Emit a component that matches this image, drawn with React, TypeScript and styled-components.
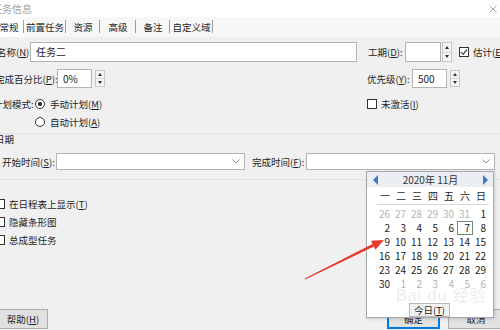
import React from 'react';
import styled, { createGlobalStyle, css } from 'styled-components';

const GlobalStyle = createGlobalStyle`
  html, body { margin: 0; padding: 0; }
  body {
    width: 500px;
    height: 330px;
    overflow: hidden;
    background: #f0f0f0;
    font-family: "Noto Sans CJK SC", "Noto Sans", sans-serif;
    font-size: 9.5px;
    color: #1e1e1e;
  }
  u { text-decoration-thickness: 1px; text-underline-offset: 1px; }
`;

const Dialog = styled.div`
  position: relative;
  width: 500px;
  height: 330px;
  display: flex;
  flex-direction: column;
  overflow: hidden;
`;

const TitleBar = styled.div`
  height: 17px;
  background: #fff;
  display: flex;
  align-items: center;
  justify-content: space-between;
  padding-right: 3px;
`;

const Title = styled.span`
  margin-left: -8px;
  color: #a0a0a0;
  font-size: 10px;
  line-height: 12px;
`;

const TabStrip = styled.div`
  height: 20px;
  display: flex;
  align-items: stretch;
  background: #f7f7f7;
`;

const Tab = styled.div<{ w: number; active?: boolean; first?: boolean }>`
  width: ${p => p.w}px;
  display: flex;
  align-items: center;
  justify-content: center;
  position: relative;
  line-height: 12px;
  ${p => p.first && css`margin-left: -6px;`}
  ${p => p.active && css`background: #fff;`}
  &::after {
    content: "";
    position: absolute;
    right: 0;
    top: 3px;
    bottom: 4px;
    width: 1px;
    background: #9c9c9c;
  }
`;

const Content = styled.div`
  display: flex;
  flex-direction: column;
`;

const Row = styled.div<{ top: number; h: number }>`
  margin-top: ${p => p.top}px;
  height: ${p => p.h}px;
  display: grid;
  grid-template-columns: 367px 1fr;
  align-items: center;
`;

const Group = styled.div`
  display: flex;
  align-items: center;
  height: 100%;
`;

const Label = styled.span<{ w?: number; ml?: number }>`
  ${p => p.w && css`width: ${p.w}px;`}
  ${p => p.ml && css`margin-left: ${p.ml}px;`}
  flex-shrink: 0;
  white-space: nowrap;
  line-height: 12px;
`;

const TextBox = styled.div<{ w: number; h?: number }>`
  width: ${p => p.w}px;
  height: ${p => p.h ?? 20}px;
  box-sizing: border-box;
  border: 1px solid #b4b4b4;
  background: #fff;
  display: flex;
  align-items: center;
  padding-left: 5px;
  font-size: 10px;
  line-height: 12px;
`;

const Spin = styled.div<{ h: number; ml: number }>`
  width: 10px;
  height: ${p => p.h}px;
  margin-left: ${p => p.ml}px;
  box-sizing: border-box;
  border: 1px solid #c8c8c8;
  background: #f4f4f4;
  display: flex;
  flex-direction: column;
`;

const SpinHalf = styled.div<{ down?: boolean }>`
  flex: 1;
  display: flex;
  align-items: center;
  justify-content: center;
  ${p => p.down && css`border-top: 1px solid #d6d6d6;`}
  &::before {
    content: "";
    border-left: 2px solid transparent;
    border-right: 2px solid transparent;
    ${p => p.down ? css`border-top: 3px solid #333;` : css`border-bottom: 3px solid #333;`}
  }
`;

const Box = styled.span<{ ml?: number }>`
  width: 10px;
  height: 10px;
  box-sizing: border-box;
  border: 1px solid #333;
  background: #fff;
  flex-shrink: 0;
  margin-left: ${p => p.ml ?? 0}px;
  margin-right: 4px;
  display: flex;
  align-items: center;
  justify-content: center;
`;

const Radio = styled.span<{ on?: boolean }>`
  width: 10px;
  height: 10px;
  box-sizing: border-box;
  border: 1px solid #333;
  border-radius: 50%;
  background: #fff;
  margin-right: 5px;
  flex-shrink: 0;
  display: flex;
  align-items: center;
  justify-content: center;
  &::after {
    content: "";
    width: 4px;
    height: 4px;
    border-radius: 50%;
    background: ${p => (p.on ? '#222' : 'transparent')};
  }
`;

const SectionHead = styled.div`
  margin-top: 4px;
  border-top: 1px solid #e2e2e2;
  height: 11px;
  line-height: 10px;
  margin-left: -5px;
`;

const DateRow = styled.div`
  margin-top: 8px;
  height: 17px;
  display: flex;
  align-items: center;
  padding-left: 2px;
`;

const Combo = styled.div<{ w: number }>`
  width: ${p => p.w}px;
  height: 17px;
  box-sizing: border-box;
  border: 1px solid #b4b4b4;
  background: #fff;
  display: flex;
  align-items: center;
  justify-content: flex-end;
  padding-right: 4px;
`;

const Divider = styled.div`
  margin-top: 9px;
  border-top: 1px solid #e2e2e2;
`;

const CheckList = styled.div`
  margin-top: 17px;
  display: flex;
  flex-direction: column;
  gap: 4px;
`;

const CheckLine = styled.div`
  height: 14px;
  display: flex;
  align-items: center;
`;

const Footer = styled.div`
  margin-top: auto;
  margin-bottom: 1px;
  height: 20px;
  display: flex;
  align-items: flex-start;
`;

const Button = styled.div<{ w: number; primary?: boolean }>`
  width: ${p => p.w}px;
  height: 20px;
  box-sizing: border-box;
  background: #e1e1e1;
  border: 1px solid ${p => (p.primary ? '#0078d7' : '#adadad')};
  ${p => p.primary && css`box-shadow: inset 0 0 0 1px #0078d7;`}
  display: flex;
  align-items: center;
  justify-content: center;
  line-height: 12px;
  flex-shrink: 0;
`;

const HelpButton = styled(Button)`
  margin-left: -2px;
`;

const RightButtons = styled.div`
  margin-left: auto;
  margin-right: -4px;
  display: flex;
  gap: 8px;
`;

/* calendar popup */
const Calendar = styled.div`
  position: absolute;
  left: 366px;
  top: 171px;
  width: 128px;
  height: 147px;
  box-sizing: border-box;
  background: #fff;
  border: 1px solid #a8a8a8;
  box-shadow: 1px 1px 3px rgba(0, 0, 0, 0.15);
  display: flex;
  flex-direction: column;
  font-size: 10px;
`;

const CalHead = styled.div`
  height: 15px;
  background: #eaeef3;
  display: flex;
  align-items: center;
  justify-content: space-between;
  padding: 0 5px 0 6px;
  line-height: 12px;
  color: #333;
`;

const Arrow = styled.span<{ dir: 'l' | 'r' }>`
  width: 0;
  height: 0;
  border-top: 5px solid transparent;
  border-bottom: 5px solid transparent;
  ${p => p.dir === 'l'
    ? css`border-right: 5px solid #3a79c4;`
    : css`border-left: 5px solid #3a79c4;`}
`;

const CalBody = styled.div`
  padding-left: 10px;
  width: 112px;
`;

const WeekRow = styled.div`
  margin-top: 2px;
  height: 14px;
  display: grid;
  grid-template-columns: repeat(7, 16px);
  border-bottom: 1px solid #d8d8d8;
  padding-bottom: 1px;
  align-items: center;
  line-height: 12px;
`;

const WeekDay = styled.span`
  text-align: center;
`;

const DayGrid = styled.div`
  margin-top: 2px;
  display: grid;
  grid-template-columns: repeat(7, 16px);
  grid-auto-rows: 14px;
`;

const Day = styled.span<{ muted?: boolean; today?: boolean }>`
  box-sizing: border-box;
  text-align: right;
  padding-right: 3px;
  line-height: 14px;
  color: ${p => (p.muted ? '#b3b3b3' : '#222')};
  ${p => p.today && css`border: 1px solid #6f8a6f; line-height: 12px; padding-right: 2px;`}
`;

const TodayButton = styled.div`
  margin: 12px 0 0 42px;
  width: 41px;
  height: 14px;
  box-sizing: border-box;
  border: 1px solid #b8b8b8;
  background: #f2f2f2;
  display: flex;
  align-items: center;
  justify-content: center;
  line-height: 12px;
  font-size: 9.5px;
`;

const Watermark = styled.div`
  position: absolute;
  left: 396px;
  top: 287px;
  font-family: "Liberation Sans", "Noto Sans CJK SC", sans-serif;
  font-size: 16px;
  line-height: 18px;
  letter-spacing: 1px;
  color: rgba(160, 160, 160, 0.22);
  pointer-events: none;
`;

const Overlay = styled.svg`
  position: absolute;
  left: 0;
  top: 0;
  pointer-events: none;
`;

const U: React.FC<{ k: string }> = ({ k }) => <>(<u>{k}</u>)</>;

const days: { d: number; muted?: boolean }[] = [
  ...[26, 27, 28, 29, 30, 31].map(d => ({ d, muted: true })),
  ...Array.from({ length: 30 }, (_, i) => ({ d: i + 1 })),
  ...[1, 2, 3, 4, 5, 6].map(d => ({ d, muted: true })),
];

const CheckMark = () => (
  <svg width="8" height="8" viewBox="0 0 8 8">
    <path d="M1 4.2 L3.2 6.3 L7 1.6" fill="none" stroke="#222" strokeWidth="1.1" />
  </svg>
);

const Chevron = () => (
  <svg width="8" height="5" viewBox="0 0 8 5">
    <path d="M0.5 0.5 L4 4 L7.5 0.5" fill="none" stroke="#8a8a8a" strokeWidth="1" />
  </svg>
);

export default function App() {
  return (
    <Dialog>
      <GlobalStyle />
      <TitleBar>
        <Title>任务信息</Title>
        <svg width="8" height="8" viewBox="0 0 8 8">
          <path d="M0.5 0.5 L7.5 7.5 M7.5 0.5 L0.5 7.5" stroke="#9a9a9a" strokeWidth="0.9" />
        </svg>
      </TitleBar>

      <TabStrip>
        <Tab w={30} first active>常规</Tab>
        <Tab w={42}>前置任务</Tab>
        <Tab w={34}>资源</Tab>
        <Tab w={36}>高级</Tab>
        <Tab w={34}>备注</Tab>
        <Tab w={43}>自定义域</Tab>
      </TabStrip>

      <Content>
        <Row top={5} h={20}>
          <Group>
            <Label w={33} style={{ marginLeft: -3 }}>名称<U k="N" />:</Label>
            <TextBox w={327}>任务二</TextBox>
          </Group>
          <Group>
            <Label w={37} ml={1}>工期<U k="D" />:</Label>
            <TextBox w={36} />
            <Spin h={20} ml={1}><SpinHalf /><SpinHalf down /></Spin>
            <Box ml={7}><CheckMark /></Box>
            <Label>估计<U k="E" /></Label>
          </Group>
        </Row>

        <Row top={7} h={19}>
          <Group>
            <Label w={62} style={{ marginLeft: -5 }}>完成百分比<U k="P" />:</Label>
            <TextBox w={35} h={19}>0%</TextBox>
            <Spin h={17} ml={3}><SpinHalf /><SpinHalf down /></Spin>
          </Group>
          <Group>
            <Label w={45}>优先级<U k="Y" />:</Label>
            <TextBox w={35} h={19}>500</TextBox>
            <Spin h={17} ml={3}><SpinHalf /><SpinHalf down /></Spin>
          </Group>
        </Row>

        <Row top={9} h={14}>
          <Group>
            <Label w={42} style={{ marginLeft: -7 }}>计划模式:</Label>
            <Radio on />
            <Label>手动计划<U k="M" /></Label>
          </Group>
          <Group>
            <Box />
            <Label>未激活<U k="I" /></Label>
          </Group>
        </Row>

        <Row top={4} h={14}>
          <Group>
            <Label w={35} />
            <Radio />
            <Label>自动计划<U k="A" /></Label>
          </Group>
        </Row>

        <SectionHead>日期</SectionHead>

        <DateRow>
          <Label w={54}>开始时间<U k="S" />:</Label>
          <Combo w={189}><Chevron /></Combo>
          <Label w={54} ml={7}>完成时间<U k="F" />:</Label>
          <Combo w={189}><Chevron /></Combo>
        </DateRow>

        <Divider />

        <CheckList>
          <CheckLine><Box ml={-5} />在日程表上显示<U k="T" /></CheckLine>
          <CheckLine><Box ml={-5} />隐藏条形图</CheckLine>
          <CheckLine><Box ml={-5} />总成型任务</CheckLine>
        </CheckList>
      </Content>

      <Footer>
        <HelpButton w={50}>帮助<U k="H" /></HelpButton>
        <RightButtons>
          <Button w={53} primary>确定</Button>
          <Button w={56}>取消</Button>
        </RightButtons>
      </Footer>

      <Calendar>
        <CalHead>
          <Arrow dir="l" />
          <span>2020年 11月</span>
          <Arrow dir="r" />
        </CalHead>
        <CalBody>
          <WeekRow>
            {['一', '二', '三', '四', '五', '六', '日'].map(w => (
              <WeekDay key={w}>{w}</WeekDay>
            ))}
          </WeekRow>
          <DayGrid>
            {days.map((x, i) => (
              <Day key={i} muted={x.muted} today={!x.muted && x.d === 7}>{x.d}</Day>
            ))}
          </DayGrid>
        </CalBody>
        <TodayButton>今日<U k="T" /></TodayButton>
      </Calendar>

      <Watermark>Bai du 经验</Watermark>

      <Overlay width="500" height="330" viewBox="0 0 500 330">
        <polygon
          points="304.8,278.6 372.5,244 371,240.8 384,240 375.4,249.8 373.9,246.6 305.2,279.4"
          fill="#e53a2c"
        />
      </Overlay>
    </Dialog>
  );
}
